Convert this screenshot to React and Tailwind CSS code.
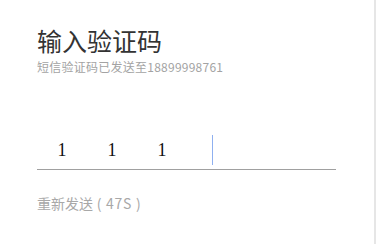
export default function App() {
  const digits = ["1", "1", "1", "", "", ""];
  return (
    <div className="w-[376px] h-[244px] bg-white flex overflow-hidden">
      <div className="flex-1 pl-[37px] pt-[25px] font-['Noto_Sans_CJK_SC','Noto_Sans',sans-serif]">
        <div className="text-[25px] leading-[30px] text-[#333333]">输入验证码</div>
        <div className="mt-[4px] text-[12px] leading-[16px] tracking-[0.25px] text-[#a3a3a3]">短信验证码已发送至18899998761</div>
        <div className="mt-[55px] w-[299px] flex flex-col">
          <div className="h-[39px] flex">
            {digits.map((d, i) => (
              <div key={i} className="w-[50px] h-full flex items-center justify-center shrink-0">
                {d ? (
                  <span className="text-[18px] leading-none text-[#111111] font-['Liberation_Serif',serif]">{d}</span>
                ) : i === 3 ? (
                  <span className="block w-px h-[30px] bg-[#8fb0f0]" />
                ) : null}
              </div>
            ))}
          </div>
          <div className="h-px bg-[#a0a0a0]" />
        </div>
        <div className="mt-[24px] text-[14px] leading-[18px] text-[#a8a8a8] whitespace-pre">
          {"重新发送"}
          <span className="tracking-[0.7px]">{" ( 47S )"}</span>
        </div>
      </div>
      <div className="w-[2px] h-full bg-[#e6e6e6]" />
    </div>
  );
}
